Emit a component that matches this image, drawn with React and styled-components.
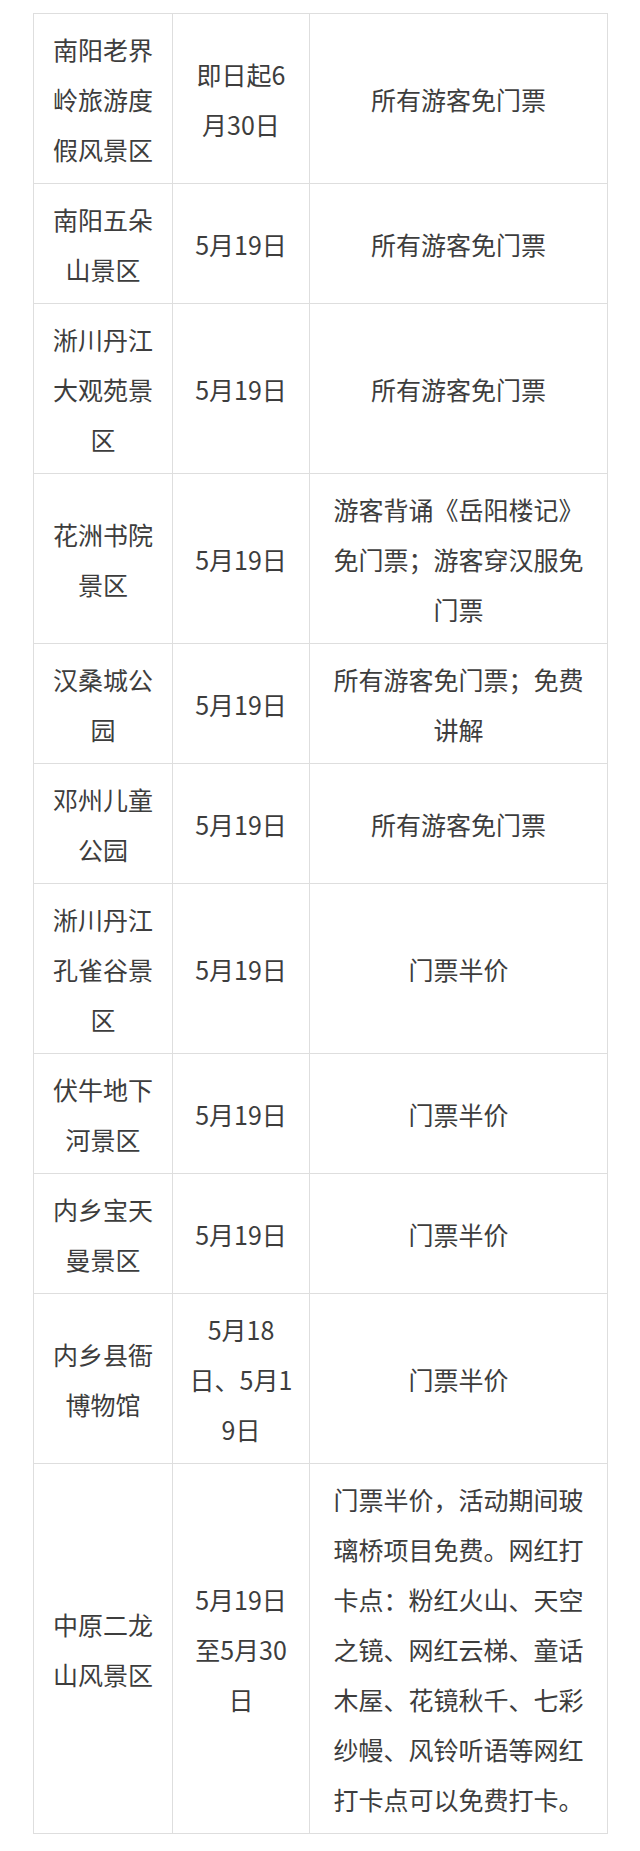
import React from "react";
import styled, { createGlobalStyle } from "styled-components";

const GlobalStyle = createGlobalStyle`
  * {
    box-sizing: border-box;
  }
  html, body {
    margin: 0;
    padding: 0;
    background: #ffffff;
  }
  body {
    font-family: "Noto Sans CJK SC", "Noto Sans", sans-serif;
  }
`;

const Page = styled.div`
  width: 640px;
  min-height: 1851px;
  padding: 13px 0 0 33px;
  background: #ffffff;
`;

const Table = styled.table`
  border-collapse: separate;
  border-spacing: 0;
  table-layout: fixed;
  width: 575px;
  border-top: 1px solid #dedede;
  border-left: 1px solid #dedede;
`;

const Col = styled.col`
  width: ${(p) => p.$w}px;
`;

const Cell = styled.td`
  border-right: 1px solid #dedede;
  border-bottom: 1px solid #dedede;
  padding: 10px ${(p) => p.$px}px 9px;
  font-size: 25px;
  line-height: 50px;
  color: #3d3d3d;
  text-align: center;
  vertical-align: middle;
  word-break: break-all;
`;

const rows = [
  ["南阳老界岭旅游度假风景区", "即日起6月30日", "所有游客免门票"],
  ["南阳五朵山景区", "5月19日", "所有游客免门票"],
  ["淅川丹江大观苑景区", "5月19日", "所有游客免门票"],
  ["花洲书院景区", "5月19日", "游客背诵《岳阳楼记》免门票；游客穿汉服免门票"],
  ["汉桑城公园", "5月19日", "所有游客免门票；免费讲解"],
  ["邓州儿童公园", "5月19日", "所有游客免门票"],
  ["淅川丹江孔雀谷景区", "5月19日", "门票半价"],
  ["伏牛地下河景区", "5月19日", "门票半价"],
  ["内乡宝天曼景区", "5月19日", "门票半价"],
  ["内乡县衙博物馆", "5月18日、5月19日", "门票半价"],
  [
    "中原二龙山风景区",
    "5月19日至5月30日",
    "门票半价，活动期间玻璃桥项目免费。网红打卡点：粉红火山、天空之镜、网红云梯、童话木屋、花镜秋千、七彩纱幔、风铃听语等网红打卡点可以免费打卡。",
  ],
];

export default function App() {
  return (
    <>
      <GlobalStyle />
      <Page>
        <Table>
          <colgroup>
            <Col $w={139} />
            <Col $w={137} />
            <Col $w={298} />
          </colgroup>
          <tbody>
            {rows.map(([name, date, policy]) => (
              <tr key={name}>
                <Cell $px={14}>{name}</Cell>
                <Cell $px={14}>{date}</Cell>
                <Cell $px={17}>{policy}</Cell>
              </tr>
            ))}
          </tbody>
        </Table>
      </Page>
    </>
  );
}
